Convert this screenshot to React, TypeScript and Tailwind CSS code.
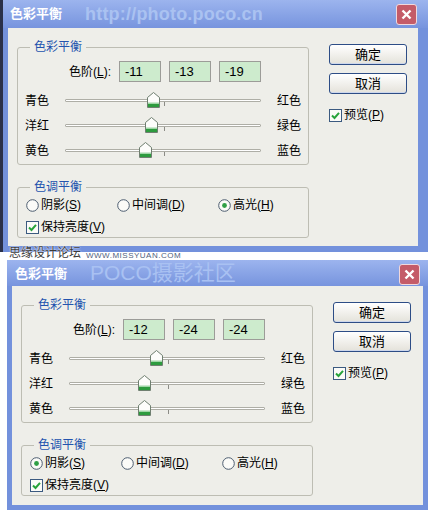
import React from "react";

type Tone = 0 | 1 | 2;

const Mn = ({ t, k }: { t: string; k: string }) => (
  <>
    {t}(<span className="underline">{k}</span>)
  </>
);

function CheckBox() {
  return (
    <svg width="13" height="13" viewBox="0 0 13 13" className="shrink-0">
      <rect x="0.5" y="0.5" width="12" height="12" fill="#fbfbf8" stroke="#3b5a80" />
      <path d="M3 6.5 L5.5 9 L10 3.8" fill="none" stroke="#27a33a" strokeWidth="2" />
    </svg>
  );
}

function RadioDot({ on }: { on: boolean }) {
  return (
    <svg width="13" height="13" viewBox="0 0 13 13" className="shrink-0">
      <circle cx="6.5" cy="6.5" r="5.8" fill="#fbfbf8" stroke="#4d5d70" strokeWidth="1" />
      {on && <circle cx="6.5" cy="6.5" r="2.4" fill="#2f9f46" />}
    </svg>
  );
}

function Thumb() {
  return (
    <svg width="13" height="16" viewBox="0 0 13 16">
      <path d="M6.5 0.5 L12.5 5.5 L12.5 15.5 L0.5 15.5 L0.5 5.5 Z" fill="#fdfdfb" stroke="#6f7f70" />
      <rect x="1" y="12" width="11" height="3" fill="#2d9b3e" />
      <rect x="1" y="10.5" width="11" height="1.5" fill="#9fd6a5" />
    </svg>
  );
}

function Slider({ left, right, value }: { left: string; right: string; value: number }) {
  const x = 98 + value * 0.98;
  return (
    <div className="flex h-[25px] items-center">
      <div className="w-[47px] pl-[7px]">{left}</div>
      <div className="relative h-[3px] w-[196px] rounded-[1px] border border-[#aeaea6] bg-white">
        <div className="absolute left-[98px] top-[2px] h-[4px] w-px bg-[#8c8c86]" />
        <div className="absolute top-[-8px]" style={{ left: x - 6.5 }}>
          <Thumb />
        </div>
      </div>
      <div className="ml-[16px]">{right}</div>
    </div>
  );
}

function Button({ children }: { children: React.ReactNode }) {
  return (
    <div className="flex h-[21px] w-[78px] items-center justify-center rounded-[3px] border border-[#2d4d86] bg-linear-to-b from-white to-[#e4e2da] text-[13px] shadow-[inset_0_-1px_0_#cdd7ec]">
      {children}
    </div>
  );
}

function Dialog({
  outer,
  frame,
  titleBar,
  watermark,
  values,
  tone,
}: {
  outer: string;
  frame: string;
  titleBar: string;
  watermark: React.ReactNode;
  values: number[];
  tone: Tone;
}) {
  const tones = [
    { t: "阴影", k: "S", w: "w-[91px]" },
    { t: "中间调", k: "D", w: "w-[101px]" },
    { t: "高光", k: "H", w: "w-[80px]" },
  ];
  return (
    <div className={`flex flex-col bg-[#7391dc] ${outer}`}>
      {/* title bar */}
      <div className={`flex items-center bg-linear-to-b from-[#9cb4ee] to-[#7794de] ${titleBar}`}>
        <span className="text-[13px] font-bold text-white">色彩平衡</span>
        <div className="ml-[23px] flex-1">{watermark}</div>
        <div className="flex h-[21px] w-[21px] items-center justify-center rounded-[3px] border border-[#f0d8dc] bg-[#c45b68]">
          <svg width="11" height="11" viewBox="0 0 11 11">
            <path d="M1.5 1.5 L9.5 9.5 M9.5 1.5 L1.5 9.5" stroke="white" strokeWidth="2.4" />
          </svg>
        </div>
      </div>

      <div className={`flex flex-1 ${frame}`}>
        <div className="flex flex-1 bg-[#eeeee9] pl-[9px] text-[12px] leading-[14px] text-black">
          <div className="pt-[12px]">
            <fieldset className="w-[292px] rounded-[3px] border border-[#bdbdb3] pb-[1px]">
              <legend className="ml-[12px] px-[4px] text-[12px] leading-[14px] text-[#2353ae]">色彩平衡</legend>
              <div className="mt-[7px] flex h-[21px] items-center">
                <div className="w-[101px] pr-[8px] text-right">
                  色阶(<span className="underline">L</span>):
                </div>
                {values.map((v, i) => (
                  <div
                    key={i}
                    className="mr-[8px] h-[21px] w-[42px] border border-[#9c9c98] bg-[#cdebcd] px-[5px] text-[13px] leading-[19px]"
                  >
                    {v}
                  </div>
                ))}
              </div>
              <div className="mt-[6px]">
                <Slider left="青色" right="红色" value={values[0]} />
                <Slider left="洋红" right="绿色" value={values[1]} />
                <Slider left="黄色" right="蓝色" value={values[2]} />
              </div>
            </fieldset>

            <fieldset className="mt-[15px] w-[292px] rounded-[3px] border border-[#bdbdb3] pb-[1px]">
              <legend className="ml-[12px] px-[4px] text-[12px] leading-[14px] text-[#2353ae]">色调平衡</legend>
              <div className="mt-[2px] flex h-[18px] items-center pl-[8px]">
                {tones.map((o, i) => (
                  <div key={o.k} className={`flex items-center gap-[2px] ${o.w}`}>
                    <RadioDot on={tone === i} />
                    <span>
                      <Mn t={o.t} k={o.k} />
                    </span>
                  </div>
                ))}
              </div>
              <div className="mt-[4px] flex h-[18px] items-center gap-[2px] pl-[8px]">
                <CheckBox />
                <span>
                  <Mn t="保持亮度" k="V" />
                </span>
              </div>
            </fieldset>
          </div>

          <div className="ml-[20px] flex flex-col pt-[16px]">
            <Button>确定</Button>
            <div className="mt-[8px]">
              <Button>取消</Button>
            </div>
            <div className="mt-[14px] flex items-center gap-[2px]">
              <CheckBox />
              <span>
                <Mn t="预览" k="P" />
              </span>
            </div>
          </div>
        </div>
      </div>
    </div>
  );
}

export default function App() {
  return (
    <div className="relative h-[514px] w-[428px] overflow-hidden bg-white font-['Liberation_Sans','Noto_Sans_CJK_SC',sans-serif]">
      <Dialog
        outer="h-[252px] w-[428px] border-l-[3px] border-[#2a3049]"
        frame="pl-[5px] pr-[10px] pb-[6px]"
        titleBar="h-[28px] pl-[7px] pr-[11px]"
        watermark={
          <span className="text-[18px] font-bold tracking-[0.2px] text-[#aac2f1]">http://photo.poco.cn</span>
        }
        values={[-11, -13, -19]}
        tone={2}
      />
      <div className="h-[8px]" />
      <Dialog
        outer="ml-[7px] h-[250px] w-[421px]"
        frame="pl-[5px] pr-[5px] pb-[5px]"
        titleBar="h-[26px] pl-[8px] pr-[8px] pt-[2px]"
        watermark={<span className="text-[21px] leading-[21px] text-[#a9c1f2]">POCO摄影社区</span>}
        values={[-12, -24, -24]}
        tone={0}
      />

      {/* watermark between the dialogs */}
      <div className="absolute left-[9px] top-[247px] flex items-end gap-[5px]">
        <span className="text-[12px] leading-[13px] text-[#3b3b3b] [text-shadow:0_0_2px_#fff,0_0_1px_#fff]">
          思缘设计论坛
        </span>
        <span className="text-[8px] leading-[9px] tracking-[0.5px] text-[#4f5f80] [text-shadow:0_0_1px_#fff]">
          WWW.MISSYUAN.COM
        </span>
      </div>
    </div>
  );
}
